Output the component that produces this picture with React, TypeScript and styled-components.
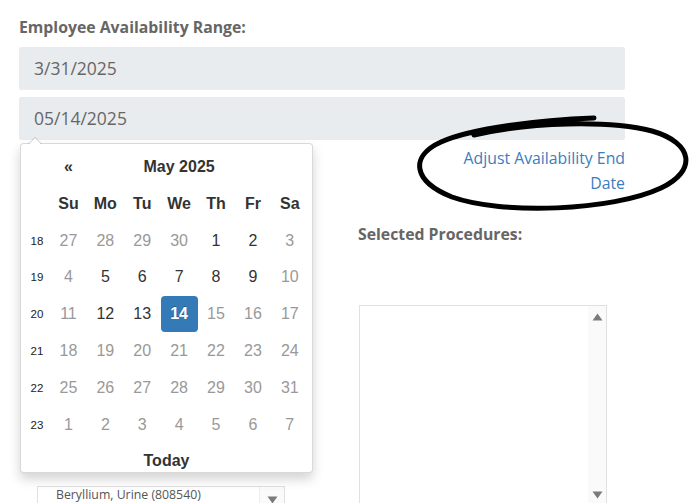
import styled, { createGlobalStyle } from "styled-components";

const GlobalStyle = createGlobalStyle`
    html, body {
        margin: 0;
        padding: 0;
        background: #ffffff;
        overflow: hidden;
    }
    body {
        font-family: "Open Sans", "Liberation Sans", sans-serif;
    }
`;

type Day = {
    n: number
    muted?: boolean
    active?: boolean
}

const weeks: { wk: number, days: Day[] }[] = [
    {wk: 18, days: [{n: 27, muted: true}, {n: 28, muted: true}, {n: 29, muted: true}, {n: 30, muted: true}, {n: 1}, {n: 2}, {n: 3, muted: true}]},
    {wk: 19, days: [{n: 4, muted: true}, {n: 5}, {n: 6}, {n: 7}, {n: 8}, {n: 9}, {n: 10, muted: true}]},
    {wk: 20, days: [{n: 11, muted: true}, {n: 12}, {n: 13}, {n: 14, active: true}, {n: 15, muted: true}, {n: 16, muted: true}, {n: 17, muted: true}]},
    {wk: 21, days: [18, 19, 20, 21, 22, 23, 24].map(n => ({n, muted: true}))},
    {wk: 22, days: [25, 26, 27, 28, 29, 30, 31].map(n => ({n, muted: true}))},
    {wk: 23, days: [1, 2, 3, 4, 5, 6, 7].map(n => ({n, muted: true}))},
];

const dayNames = ["Su", "Mo", "Tu", "We", "Th", "Fr", "Sa"];

function UpArrow() {
    return <svg width="11" height="8" viewBox="0 0 11 8"><path d="M5.5 0.5 L10.5 7.5 L0.5 7.5 Z" fill="#7a7a7a"/></svg>
}

function DownArrow() {
    return <svg width="11" height="8" viewBox="0 0 11 8"><path d="M0.5 0.5 L10.5 0.5 L5.5 7.5 Z" fill="#7a7a7a"/></svg>
}

function DatePicker() {
    return (
        <StyledPicker>
            <StyledGrid>
                <span/>
                <StyledNav>«</StyledNav>
                <StyledTitle>May 2025</StyledTitle>
                <span/>
                {dayNames.map((d, i) => <StyledDow key={d} $first={i === 0}>{d}</StyledDow>)}
                {weeks.map(w => (
                    <StyledWeekRow key={w.wk}>
                        <StyledWeekNo>{w.wk}</StyledWeekNo>
                        {w.days.map((d, i) => (
                            <StyledDay key={i} $muted={d.muted} $active={d.active}>{d.n}</StyledDay>
                        ))}
                    </StyledWeekRow>
                ))}
            </StyledGrid>
            <StyledToday>Today</StyledToday>
        </StyledPicker>
    )
}

export default function App() {
    return (
        <StyledStage>
            <GlobalStyle/>
            <StyledPage>
                <StyledLabel>Employee Availability Range:</StyledLabel>
                <StyledInput>3/31/2025</StyledInput>
                <StyledInputWrap>
                    <StyledInput>05/14/2025</StyledInput>
                    <DatePicker/>
                </StyledInputWrap>
                <StyledLinkRow>
                    <StyledLink href="#">Adjust Availability End Date</StyledLink>
                </StyledLinkRow>
                <StyledProcGrid>
                    <StyledLeftCol>
                        <StyledLabel>Available Procedures:</StyledLabel>
                        <StyledSearch>Search procedures...</StyledSearch>
                        <StyledSelect>
                            <StyledSelectText>Beryllium, Urine (808540)</StyledSelectText>
                            <StyledSelectCaret><DownArrow/></StyledSelectCaret>
                        </StyledSelect>
                    </StyledLeftCol>
                    <StyledRightCol>
                        <StyledLabel>Selected Procedures:</StyledLabel>
                        <StyledListBox>
                            <StyledOptions/>
                            <StyledScrollbar>
                                <UpArrow/>
                                <DownArrow/>
                            </StyledScrollbar>
                        </StyledListBox>
                    </StyledRightCol>
                </StyledProcGrid>
            </StyledPage>
            <StyledCircle width="691" height="503" viewBox="0 0 691 503">
                <path
                    d="M 594 118 C 540 120, 472 128, 441 142 C 410 156, 412 181, 452 197 C 502 215, 612 211, 661 188 C 697 171, 694 143, 652 131 C 608 120, 530 122, 474 135"
                    fill="none" stroke="#000" strokeWidth="5" strokeLinecap="round"/>
            </StyledCircle>
        </StyledStage>
    )
}

const StyledStage = styled.div`
    position: relative;
    width: 691px;
    height: 503px;
    overflow: hidden;
`;

const StyledPage = styled.div`
    width: 606px;
    padding: 17px 0 0 19px;
`;

const StyledLabel = styled.div`
    font-size: 15.8px;
    font-weight: 700;
    line-height: 20px;
    color: #666666;
    white-space: nowrap;
`;

const StyledInput = styled.div`
    height: 43px;
    margin-top: 10px;
    padding: 0 15px;
    background: #e9ecef;
    border-radius: 2px;
    font-size: 17.5px;
    line-height: 43px;
    color: #666666;
`;

const StyledInputWrap = styled.div`
    position: relative;
    margin-top: 7px;

    & > div:first-child {
        margin-top: 0;
    }
`;

const StyledPicker = styled.div`
    position: absolute;
    top: 46px;
    left: 1px;
    z-index: 5;
    box-sizing: border-box;
    width: 293px;
    padding: 4.6px 3px 0 3px;
    background: #ffffff;
    border: 1px solid rgba(0, 0, 0, 0.15);
    border-radius: 4px;
    box-shadow: 0 6px 12px rgba(0, 0, 0, 0.175);
    font-family: "Liberation Sans", Arial, sans-serif;
    color: #333333;

    &::before {
        content: "";
        position: absolute;
        top: -7px;
        left: 7px;
        border-left: 7px solid transparent;
        border-right: 7px solid transparent;
        border-bottom: 7px solid rgba(0, 0, 0, 0.2);
    }

    &::after {
        content: "";
        position: absolute;
        top: -6px;
        left: 8px;
        border-left: 6px solid transparent;
        border-right: 6px solid transparent;
        border-bottom: 6px solid #ffffff;
    }
`;

const StyledGrid = styled.div`
    display: grid;
    grid-template-columns: 26px repeat(7, 36.9px);
    grid-auto-rows: 36.8px;
    align-items: center;
    text-align: center;
`;

const StyledNav = styled.div`
    font-size: 16px;
    font-weight: 700;
`;

const StyledTitle = styled.div`
    grid-column: span 5;
    font-size: 16px;
    font-weight: 700;
`;

const StyledDow = styled.div<{ $first?: boolean }>`
    grid-column: ${p => p.$first ? 2 : "auto"};
    font-size: 16px;
    font-weight: 700;
`;

const StyledWeekRow = styled.div`
    display: contents;
`;

const StyledWeekNo = styled.div`
    font-size: 11.5px;
    color: #222222;
`;

const StyledDay = styled.div<{ $muted?: boolean, $active?: boolean }>`
    height: 36px;
    line-height: 36px;
    font-size: 16px;
    border-radius: 4px;
    color: ${p => p.$active ? "#ffffff" : p.$muted ? "#999999" : "#333333"};
    background: ${p => p.$active ? "#337ab7" : "transparent"};
    font-weight: ${p => p.$active ? 700 : 400};
    text-shadow: ${p => p.$active ? "0 -1px 0 rgba(0, 0, 0, 0.25)" : "none"};
`;

const StyledToday = styled.div`
    padding-top: 7px;
    line-height: 22px;
    text-align: center;
    font-size: 16px;
    font-weight: 700;
`;

const StyledLinkRow = styled.div`
    padding-top: 6px;
    text-align: right;
`;

const StyledLink = styled.a`
    display: inline-block;
    max-width: 185px;
    font-size: 15.8px;
    line-height: 25px;
    color: #3a7dc0;
    text-decoration: none;
`;

const StyledProcGrid = styled.div`
    display: grid;
    grid-template-columns: 339px 1fr;
    margin-top: 28px;
`;

const StyledLeftCol = styled.div`
    padding-left: 18px;
    width: 248px;
`;

const StyledRightCol = styled.div`
    display: flex;
    flex-direction: column;
`;

const StyledSearch = styled.div`
    margin-top: 16px;
    height: 34px;
    padding: 0 10px;
    border: 1px solid #dddddd;
    font-size: 12px;
    line-height: 34px;
    color: #999999;
`;

const StyledSelect = styled.div`
    display: flex;
    box-sizing: border-box;
    width: 248px;
    height: 40px;
    margin-top: 190px;
    border: 1px solid #e0e0e0;
    background: #ffffff;
`;

const StyledSelectText = styled.div`
    flex: 1;
    padding: 0 0 0 18px;
    font-size: 12.3px;
    line-height: 16px;
    color: #555555;
    white-space: nowrap;
`;

const StyledSelectCaret = styled.div`
    display: flex;
    justify-content: center;
    width: 24px;
    padding-top: 9px;
    border-left: 1px solid #eeeeee;
    background: #fafafa;
`;

const StyledListBox = styled.div`
    display: flex;
    box-sizing: border-box;
    width: 248px;
    height: 200px;
    margin-top: 61px;
    margin-left: 1px;
    border: 1px solid #e0e0e0;
    background: #ffffff;
`;

const StyledOptions = styled.div`
    flex: 1;
`;

const StyledScrollbar = styled.div`
    display: flex;
    flex-direction: column;
    justify-content: space-between;
    align-items: center;
    width: 18px;
    padding: 7px 0 5px;
    background: #fafafa;
`;

const StyledCircle = styled.svg`
    position: absolute;
    top: 0;
    left: 0;
    pointer-events: none;
    z-index: 10;
`;
